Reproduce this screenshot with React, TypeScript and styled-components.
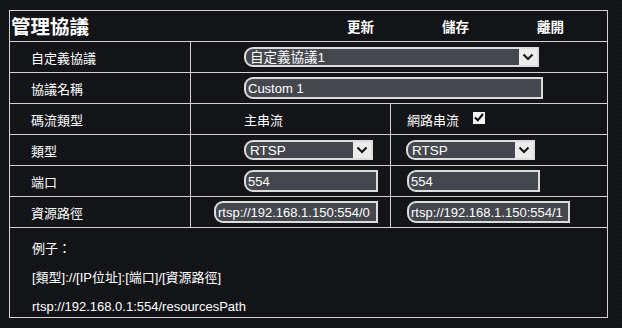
import React from "react";
import styled, { createGlobalStyle } from "styled-components";

const Global = createGlobalStyle`
  html, body { margin: 0; padding: 0; }
  body {
    width: 622px;
    height: 328px;
    overflow: hidden;
    background-color: #131417;
    background-image: repeating-conic-gradient(#16171b 0 25%, #111215 0 50%);
    background-size: 4px 4px;
    font-family: "Liberation Sans", "Noto Sans CJK TC", sans-serif;
    color: #fff;
  }
`;

const Page = styled.div`
  padding: 10px 0 0 9px;
`;

const Panel = styled.div`
  width: 599px;
  height: 308px;
  box-sizing: border-box;
  border: 1px solid #d2d2d2;
  display: flex;
  flex-direction: column;
`;

const Header = styled.div`
  height: 31px;
  box-sizing: border-box;
  border-bottom: 1px solid #d2d2d2;
  display: grid;
  grid-template-columns: 303px 95px 95px 95px;
  align-items: center;
`;

const Title = styled.div`
  padding-left: 1px;
  font-family: "Noto Sans CJK TC", sans-serif;
  font-size: 19.5px;
  font-weight: 700;
  line-height: 30px;
`;

const HeadButton = styled.button`
  background: none;
  border: none;
  color: #fff;
  padding: 0;
  font-family: "Noto Sans CJK TC", sans-serif;
  font-size: 13.5px;
  font-weight: 700;
  text-align: center;
  cursor: pointer;
`;

const Grid = styled.div`
  display: grid;
  grid-template-columns: 180px 200px 1fr;
  grid-auto-rows: 31px;
`;

const Cell = styled.div<{ $span?: number; $pad?: number; $first?: boolean }>`
  grid-column: span ${(p) => p.$span ?? 1};
  box-sizing: border-box;
  border-bottom: 1px solid #d2d2d2;
  border-left: ${(p) => (p.$first ? "none" : "1px solid #d2d2d2")};
  display: flex;
  align-items: center;
  padding-left: ${(p) => p.$pad ?? 0}px;
  font-family: "Noto Sans CJK TC", sans-serif;
  font-size: 13px;
  white-space: nowrap;
`;

const Label = styled.span`
  padding-left: 21px;
  font-family: "Noto Sans CJK TC", sans-serif;
  font-size: 13px;
`;

const Field = styled.input<{ $w: number }>`
  width: ${(p) => p.$w}px;
  height: 22px;
  box-sizing: border-box;
  border: 2px solid #dcdcdc;
  border-radius: 9px 0 0 9px;
  background: #45474f;
  color: #fff;
  padding: 0 0 0 2px;
  font-family: "Liberation Sans", "Noto Sans CJK TC", sans-serif;
  font-size: 13px;
  outline: none;
`;

const SelectBox = styled.div<{ $w: number }>`
  width: ${(p) => p.$w}px;
  height: 20px;
  box-sizing: border-box;
  border: 2px solid #dcdcdc;
  border-radius: 9px 0 0 9px;
  background: #45474f;
  display: flex;
  overflow: hidden;
`;

const NativeSelect = styled.select`
  flex: 1;
  min-width: 0;
  appearance: none;
  -webkit-appearance: none;
  background: transparent;
  border: none;
  color: #fff;
  padding: 0 0 0 4px;
  margin: 0;
  font-family: "Liberation Sans", "Noto Sans CJK TC", sans-serif;
  font-size: 13.5px;
  outline: none;
`;

const Arrow = styled.div`
  width: 18px;
  background: #ececec;
  display: flex;
  align-items: center;
  justify-content: center;
`;

const Check = styled.span`
  width: 12px;
  height: 12px;
  margin-left: 14px;
  margin-top: -3px;
  background: #f4f4f4;
  display: inline-flex;
  align-items: center;
  justify-content: center;
`;

const Footer = styled.div`
  flex: 1;
  padding: 6px 0 0 22px;
  display: flex;
  flex-direction: column;
  font-size: 13px;
  line-height: 29px;
`;

const Chevron = () => (
  <svg width="12" height="8" viewBox="0 0 12 8">
    <path d="M1.5 1.5 L6 6 L10.5 1.5" fill="none" stroke="#111" strokeWidth="2" />
  </svg>
);

const Select = ({ w, value }: { w: number; value: string }) => (
  <SelectBox $w={w}>
    <NativeSelect defaultValue={value}>
      <option value={value}>{value}</option>
    </NativeSelect>
    <Arrow>
      <Chevron />
    </Arrow>
  </SelectBox>
);

export default function App() {
  return (
    <>
      <Global />
      <Page>
        <Panel>
          <Header>
            <Title>管理協議</Title>
            <HeadButton>更新</HeadButton>
            <HeadButton>儲存</HeadButton>
            <HeadButton>離開</HeadButton>
          </Header>
          <Grid>
            <Cell $first><Label>自定義協議</Label></Cell>
            <Cell $span={2} $pad={53}><Select w={295} value="自定義協議1" /></Cell>

            <Cell $first><Label>協議名稱</Label></Cell>
            <Cell $span={2} $pad={53}><Field $w={299} defaultValue="Custom 1" /></Cell>

            <Cell $first><Label>碼流類型</Label></Cell>
            <Cell $pad={53}>主串流</Cell>
            <Cell $pad={16}>
              網路串流
              <Check>
                <svg width="10" height="9" viewBox="0 0 10 9">
                  <path d="M1 4.5 L3.8 7.3 L9 1" fill="none" stroke="#000" strokeWidth="2" />
                </svg>
              </Check>
            </Cell>

            <Cell $first><Label>類型</Label></Cell>
            <Cell $pad={53}><Select w={129} value="RTSP" /></Cell>
            <Cell $pad={15}><Select w={129} value="RTSP" /></Cell>

            <Cell $first><Label>端口</Label></Cell>
            <Cell $pad={53}><Field $w={134} defaultValue="554" /></Cell>
            <Cell $pad={16}><Field $w={133} defaultValue="554" /></Cell>

            <Cell $first><Label>資源路徑</Label></Cell>
            <Cell $pad={23}><Field $w={164} defaultValue="rtsp://192.168.1.150:554/0" /></Cell>
            <Cell $pad={16}><Field $w={163} defaultValue="rtsp://192.168.1.150:554/1" /></Cell>
          </Grid>
          <Footer>
            <div>例子：</div>
            <div>[類型]://[IP位址]:[端口]/[資源路徑]</div>
            <div>rtsp://192.168.0.1:554/resourcesPath</div>
          </Footer>
        </Panel>
      </Page>
    </>
  );
}
